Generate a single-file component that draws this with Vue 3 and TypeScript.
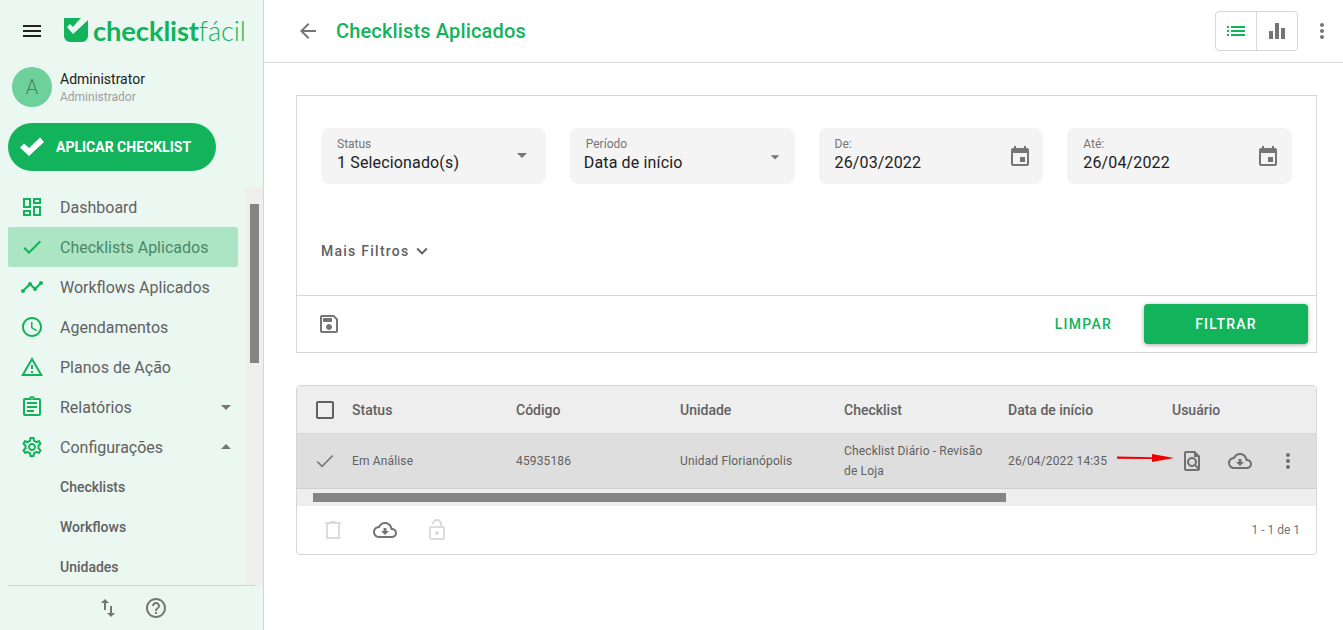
<script setup lang="ts">
interface NavItem { label: string; icon: string; active?: boolean; caret?: 'down' | 'up' }

const navItems: NavItem[] = [
  { label: 'Dashboard', icon: 'M3 13h8V3H3v10zm2-8h4v6H5V5zm8 16h8V11h-8v10zm2-8h4v6h-4v-6zM13 3v6h8V3h-8zm6 4h-4V5h4v2zM3 21h8v-6H3v6zm2-4h4v2H5v-2z' },
  { label: 'Checklists Aplicados', icon: 'M9 16.17 4.83 12l-1.42 1.41L9 19 21 7l-1.41-1.41z', active: true },
  { label: 'Workflows Aplicados', icon: 'M23 8c0 1.1-.9 2-2 2-.18 0-.35-.02-.51-.07l-3.56 3.55c.05.16.07.34.07.52 0 1.1-.9 2-2 2s-2-.9-2-2c0-.18.02-.36.07-.52l-2.55-2.55c-.16.05-.34.07-.52.07s-.36-.02-.52-.07l-4.55 4.56c.05.16.07.33.07.51 0 1.1-.9 2-2 2s-2-.9-2-2 .9-2 2-2c.18 0 .35.02.51.07l4.56-4.55C8.02 9.36 8 9.18 8 9c0-1.1.9-2 2-2s2 .9 2 2c0 .18-.02.36-.07.52l2.55 2.55c.16-.05.34-.07.52-.07s.36.02.52.07l3.55-3.56C19.02 8.35 19 8.18 19 8c0-1.1.9-2 2-2s2 .9 2 2z' },
  { label: 'Agendamentos', icon: 'M11.99 2C6.47 2 2 6.48 2 12s4.47 10 9.99 10C17.52 22 22 17.52 22 12S17.52 2 11.99 2zM12 20c-4.42 0-8-3.58-8-8s3.58-8 8-8 8 3.58 8 8-3.58 8-8 8zm.5-13H11v6l5.25 3.15.75-1.23-4.5-2.67z' },
  { label: 'Planos de Ação', icon: 'M12 5.99 19.53 19H4.47L12 5.99M12 2 1 21h22L12 2zm1 14h-2v2h2v-2zm0-6h-2v4h2v-4z' },
  { label: 'Relatórios', icon: 'M19 3h-4.18C14.4 1.84 13.3 1 12 1s-2.4.84-2.82 2H5c-.14 0-.27.01-.4.04-.39.08-.74.28-1.01.55-.18.18-.33.4-.43.64-.1.23-.16.49-.16.77v14c0 .27.06.54.16.78s.25.45.43.64c.27.27.62.47 1.01.55.13.02.26.03.4.03h14c1.1 0 2-.9 2-2V5c0-1.1-.9-2-2-2zm-7-.25c.41 0 .75.34.75.75s-.34.75-.75.75-.75-.34-.75-.75.34-.75.75-.75zM19 19H5V5h14v14zM7 15h7v2H7zm0-4h10v2H7zm0-4h10v2H7z', caret: 'down' },
  { label: 'Configurações', icon: 'M19.43 12.98c.04-.32.07-.64.07-.98s-.03-.66-.07-.98l2.11-1.65c.19-.15.24-.42.12-.64l-2-3.46c-.12-.22-.39-.3-.61-.22l-2.49 1c-.52-.4-1.08-.73-1.69-.98l-.38-2.65C14.46 2.18 14.25 2 14 2h-4c-.25 0-.46.18-.49.42l-.38 2.65c-.61.25-1.17.59-1.69.98l-2.49-1c-.23-.09-.49 0-.61.22l-2 3.46c-.13.22-.07.49.12.64l2.11 1.65c-.04.32-.07.65-.07.98s.03.66.07.98l-2.11 1.65c-.19.15-.24.42-.12.64l2 3.46c.12.22.39.3.61.22l2.49-1c.52.4 1.08.73 1.69.98l.38 2.65c.03.24.24.42.49.42h4c.25 0 .46-.18.49-.42l.38-2.65c.61-.25 1.17-.59 1.69-.98l2.49 1c.23.09.49 0 .61-.22l2-3.46c.12-.22.07-.49-.12-.64l-2.11-1.65zM17.45 11.27c.04.31.05.52.05.73 0 .21-.02.43-.05.73l-.14 1.13.89.7 1.08.84-.7 1.21-1.27-.51-1.04-.42-.9.68c-.43.32-.84.56-1.25.73l-1.06.43-.16 1.13-.2 1.35h-1.4l-.19-1.35-.16-1.13-1.06-.43c-.43-.18-.83-.41-1.23-.71l-.91-.7-1.06.43-1.27.51-.7-1.21 1.08-.84.89-.7-.14-1.13C6.52 12.43 6.5 12.2 6.5 12s.02-.43.05-.72l.14-1.13-.89-.7-1.08-.84.7-1.21 1.27.51 1.04.42.9-.68c.43-.32.84-.56 1.25-.73l1.06-.43.16-1.13.2-1.35h1.39l.19 1.35.16 1.13 1.06.43c.43.18.83.41 1.23.71l.91.7 1.06-.43 1.27-.51.7 1.21-1.07.85-.89.7.14 1.13zM12 8c-2.21 0-4 1.79-4 4s1.79 4 4 4 4-1.79 4-4-1.79-4-4-4zm0 6c-1.1 0-2-.9-2-2s.9-2 2-2 2 .9 2 2-.9 2-2 2z', caret: 'up' },
]
const subItems: string[] = ['Checklists', 'Workflows', 'Unidades']

interface Filter { label: string; value: string; kind: 'select' | 'date' }
const filters: Filter[] = [
  { label: 'Status', value: '1 Selecionado(s)', kind: 'select' },
  { label: 'Período', value: 'Data de início', kind: 'select' },
  { label: 'De:', value: '26/03/2022', kind: 'date' },
  { label: 'Até:', value: '26/04/2022', kind: 'date' },
]
const columns: string[] = ['Status', 'Código', 'Unidade', 'Checklist', 'Data de início', 'Usuário']
const cloud = 'M19.35 10.04C18.67 6.59 15.64 4 12 4 9.11 4 6.6 5.64 5.35 8.04 2.34 8.36 0 10.91 0 14c0 3.31 2.69 6 6 6h13c2.76 0 5-2.24 5-5 0-2.64-2.05-4.78-4.65-4.96zM19 18H6c-2.21 0-4-1.79-4-4 0-2.05 1.53-3.76 3.56-3.97l1.07-.11.5-.95C8.08 7.14 9.94 6 12 6c2.62 0 4.88 1.86 5.39 4.43l.3 1.5 1.53.11c1.56.1 2.78 1.41 2.78 2.96 0 1.65-1.35 3-3 3zm-5.55-8h-2.9v3H8l4 4 4-4h-2.55z'
const dots = 'M12 8c1.1 0 2-.9 2-2s-.9-2-2-2-2 .9-2 2 .9 2 2 2zm0 2c-1.1 0-2 .9-2 2s.9 2 2 2 2-.9 2-2-.9-2-2-2zm0 6c-1.1 0-2 .9-2 2s.9 2 2 2 2-.9 2-2-.9-2-2-2z'
const calendar = 'M19 4h-1V2h-2v2H8V2H6v2H5c-1.1 0-2 .9-2 2v14c0 1.1.9 2 2 2h14c1.1 0 2-.9 2-2V6c0-1.1-.9-2-2-2zm0 16H5V9h14v11zm-7-7h5v5h-5z'
</script>

<template>
  <div class="app">
    <aside class="sidebar">
      <div class="brand">
        <svg class="burger" viewBox="0 0 24 24"><path d="M3 18h18v-2H3v2zm0-5h18v-2H3v2zm0-7v2h18V6H3z" /></svg>
        <svg class="mark" viewBox="0 0 25 24">
          <path d="M0 0h17l-3 3-5 6-3-3-3 3 6 7L22 4l2-2v16a6 6 0 0 1-6 6H6a6 6 0 0 1-6-6z" />
        </svg>
        <span class="logo"><b>checklist</b><span>fácil</span></span>
      </div>
      <div class="profile">
        <div class="avatar">A</div>
        <div class="who">
          <div class="name">Administrator</div>
          <div class="role">Administrador</div>
        </div>
      </div>
      <button class="apply">
        <svg viewBox="0 0 24 24"><path d="M0 12.500 4 8.500 9 13 20 2.500 24 7 9 21z" /></svg>
        <span>APLICAR CHECKLIST</span>
      </button>
      <div class="navwrap">
        <nav class="nav">
          <a v-for="item in navItems" :key="item.label" class="navitem" :class="{ active: item.active }">
            <svg class="navicon" viewBox="0 0 24 24"><path :d="item.icon" /></svg>
            <span class="navlabel">{{ item.label }}</span>
            <svg v-if="item.caret" class="caret" viewBox="0 0 24 24"><path :d="item.caret === 'down' ? 'M7 10l5 5 5-5z' : 'M7 14l5-5 5 5z'" /></svg>
          </a>
          <a v-for="s in subItems" :key="s" class="subitem">{{ s }}</a>
        </nav>
        <div class="scroll"><div class="thumb"></div></div>
      </div>
      <div class="sidefoot">
        <svg viewBox="0 0 24 24"><path d="M16 17.01V10h-2v7.01h-3L15 21l4-3.99h-3zM9 3 5 6.99h3V14h2V6.99h3L9 3z" /></svg>
        <svg viewBox="0 0 24 24"><path d="M11 18h2v-2h-2v2zm1-16C6.48 2 2 6.48 2 12s4.48 10 10 10 10-4.48 10-10S17.52 2 12 2zm0 18c-4.41 0-8-3.59-8-8s3.59-8 8-8 8 3.59 8 8-3.59 8-8 8zm0-14c-2.21 0-4 1.79-4 4h2c0-1.1.9-2 2-2s2 .9 2 2c0 2-3 1.75-3 5h2c0-2.25 3-2.5 3-5 0-2.21-1.79-4-4-4z" /></svg>
      </div>
    </aside>

    <main class="main">
      <header class="topbar">
        <svg class="back" viewBox="0 0 24 24"><path d="M20 11H7.83l5.59-5.59L12 4l-8 8 8 8 1.41-1.41L7.83 13H20v-2z" /></svg>
        <h1>Checklists Aplicados</h1>
        <div class="toggle">
          <span class="toggle-btn">
            <svg class="green" viewBox="0 0 24 24"><path d="M3 13h2v-2H3v2zm0 4h2v-2H3v2zm0-8h2V7H3v2zm4 4h14v-2H7v2zm0 4h14v-2H7v2zM7 7v2h14V7H7z" /></svg>
          </span>
          <span class="toggle-btn">
            <svg viewBox="0 0 24 24"><path d="M10 20h4V4h-4v16zm-6 0h4v-8H4v8zM16 9v11h4V9h-4z" /></svg>
          </span>
        </div>
        <svg class="more" viewBox="0 0 24 24"><path :d="dots" /></svg>
      </header>

      <div class="content">
        <section class="filters">
          <div class="filter-body">
            <div class="fields">
              <div v-for="f in filters" :key="f.label" class="field">
                <div class="field-text">
                  <div class="field-label">{{ f.label }}</div>
                  <div class="field-value">{{ f.value }}</div>
                </div>
                <svg v-if="f.kind === 'select'" class="sel-caret" viewBox="0 0 24 24"><path d="M7 10l5 5 5-5z" /></svg>
                <svg v-else class="cal" viewBox="0 0 24 24"><path :d="calendar" /></svg>
              </div>
            </div>
            <div class="more-filters">
              <span>Mais Filtros</span>
              <svg viewBox="0 0 24 24"><path d="M7.41 8.59 12 13.17l4.59-4.58L18 10l-6 6-6-6z" /></svg>
            </div>
          </div>
          <div class="filter-foot">
            <svg class="save" viewBox="0 0 24 24"><path d="M17 3H5c-1.11 0-2 .9-2 2v14c0 1.1.89 2 2 2h14c1.1 0 2-.9 2-2V7l-4-4zm2 16H5V5h11.17L19 7.83V19zm-7-7c-1.66 0-3 1.34-3 3s1.34 3 3 3 3-1.34 3-3-1.34-3-3-3zM6 6h9v4H6z" /></svg>
            <button class="clear">LIMPAR</button>
            <button class="submit">FILTRAR</button>
          </div>
        </section>

        <section class="table">
          <div class="row head">
            <div class="check-cell"><span class="checkbox"></span></div>
            <div v-for="c in columns" :key="c" class="cell">{{ c }}</div>
          </div>
          <div class="row body">
            <div class="check-cell">
              <svg class="rowcheck" viewBox="0 0 24 24"><path d="M9 16.2 4.8 12l-1.1 1.1L9 18.4 20.4 7l-1.1-1.1z" /></svg>
            </div>
            <div class="cell">Em Análise</div>
            <div class="cell">45935186</div>
            <div class="cell">Unidad Florianópolis</div>
            <div class="cell multi">Checklist Diário - Revisão de Loja</div>
            <div class="cell">26/04/2022 14:35</div>
            <div class="actions">
              <svg class="act" viewBox="0 0 24 24"><path d="M15 2H6c-1.1 0-2 .9-2 2v16c0 1.1.9 2 2 2h12c1.1 0 2-.9 2-2V7l-5-5zM6 20V4h8v4h4v9.6l-1.9-1.9c.6-.8.9-1.7.9-2.7 0-2.8-2.2-5-5-5s-5 2.200-5 5 2.200 5 5 5c1 0 1.900-.3 2.700-.9l2.700 2.700c-.1.100-.2.200-.4.200H6zm6-4c-1.700 0-3-1.300-3-3s1.300-3 3-3 3 1.300 3 3-1.300 3-3 3z" /></svg>
              <svg class="act cloud" viewBox="0 0 24 24"><path :d="cloud" /></svg>
              <svg class="act dots" viewBox="0 0 24 24"><path :d="dots" /></svg>
            </div>
            <svg class="arrow" viewBox="0 0 60 10"><path d="M1 3.600 36 4.200 36 1 58 5 36 9 36 6 1 5.800z" /></svg>
          </div>
          <div class="hscroll"><div class="hthumb"></div></div>
          <div class="table-foot">
            <div class="bulk">
              <svg class="faded" viewBox="0 0 24 24"><path d="M15 4V3H9v1H4v2h1v15h14V6h1V4h-5zm2 15H7V6h10v13z" /></svg>
              <svg class="bulk-cloud" viewBox="0 0 24 24"><path :d="cloud" /></svg>
              <svg class="faded" viewBox="0 0 24 24"><path d="M12 17c1.100 0 2-.9 2-2s-.9-2-2-2-2 .9-2 2 .9 2 2 2zm6-9h-1V6c0-2.760-2.240-5-5-5S7 3.240 7 6h1.900c0-1.710 1.390-3.100 3.100-3.100s3.100 1.390 3.100 3.100v2H6c-1.100 0-2 .9-2 2v10c0 1.100.9 2 2 2h12c1.100 0 2-.9 2-2V10c0-1.100-.9-2-2-2zm0 12H6V10h12v10z" /></svg>
            </div>
            <span class="count">1 - 1 de 1</span>
          </div>
        </section>
      </div>
    </main>
  </div>
</template>

<style>
html, body { margin: 0; background: #fff; }
</style>

<style scoped>
.app { display: flex; height: 630px; overflow: hidden; font-family: Roboto, "Liberation Sans", sans-serif; color: #212121; }
svg { display: block; flex: none; fill: currentColor; }

.sidebar { width: 263px; flex: none; display: flex; flex-direction: column; background: #ebf8f2; border-right: 1px solid #d6d6d6; }
.brand { display: flex; align-items: center; height: 62px; padding-left: 20px; }
.burger { width: 24px; height: 24px; color: #212121; }
.mark { width: 25px; height: 24px; margin-left: 20px; margin-top: -2px; color: #12b35b; }
.logo { margin-left: 4px; margin-top: -1px; font-family: Lato, sans-serif; font-size: 27.3px; line-height: 30px; color: #12b35b; white-space: nowrap; letter-spacing: -0.1px; }
.logo b { font-weight: 700; }
.logo span { font-weight: 300; }
.profile { display: flex; align-items: center; padding: 5px 0 0 12px; height: 40px; }
.avatar { width: 40px; height: 40px; border-radius: 50%; background: #6ed09b; color: #4a7f64; font-size: 20px; font-weight: 300; display: flex; align-items: center; justify-content: center; }
.who { margin-left: 8px; }
.name { font-size: 14px; line-height: 20px; color: #212121; }
.role { font-size: 12px; line-height: 16px; color: #9e9e9e; }
.apply { display: flex; align-items: center; width: 208px; height: 48px; margin: 16px 0 16px 8px; padding: 0 0 0 12px; border: 0; border-radius: 24px; background: #12b35b; color: #fff; font: 700 14px Roboto, sans-serif; }
.apply svg { width: 24px; height: 24px; margin-right: 12px; }

.navwrap { display: flex; height: 398px; overflow: hidden; }
.nav { width: 230px; margin-left: 8px; flex: none; }
.navitem { display: flex; align-items: center; height: 40px; border-radius: 2px; color: #616161; font-size: 16px; }
.navitem.active { background: #abe5c3; color: #4d8768; }
.navicon { width: 24px; height: 24px; margin-left: 12px; color: #12b35b; }
.navlabel { margin-left: 16px; flex: 1; }
.caret { width: 24px; height: 24px; color: #757575; }
.subitem { display: block; height: 40px; line-height: 40px; padding-left: 52px; font-size: 14px; font-weight: 500; color: #616161; }
.scroll { width: 17px; margin-left: 8px; background: #eeeeee; position: relative; }
.thumb { position: absolute; left: 4px; top: 17px; width: 9px; height: 159px; background: #858585; }

.sidefoot { margin: 0 8px; width: 247px; height: 44px; box-sizing: border-box; border-top: 1px solid #d0d4d2; display: flex; align-items: center; justify-content: center; gap: 24px; color: #757575; }
.sidefoot svg { width: 24px; height: 24px; }

.main { flex: 1; min-width: 0; display: flex; flex-direction: column; }
.topbar { height: 62px; flex: none; box-sizing: content-box; border-bottom: 1px solid #d9d9d9; display: flex; align-items: center; padding-left: 32px; }
.back { width: 24px; height: 24px; color: #757575; }
h1 { margin: 0 0 0 16px; flex: 1; font-size: 20px; font-weight: 500; letter-spacing: .15px; color: #12b35b; }
.toggle { display: flex; height: 38px; border: 1px solid #d6d6d6; border-radius: 4px; margin-top: -1px; }
.toggle-btn { width: 40px; display: flex; align-items: center; justify-content: center; color: #757575; }
.toggle-btn + .toggle-btn { border-left: 1px solid #d6d6d6; }
.toggle-btn svg { width: 24px; height: 24px; }
.green { color: #12b35b; }
.more { width: 24px; height: 24px; margin: 0 9px 0 12px; color: #757575; }

.content { padding: 32px 26px 0 32px; }
.filters { border: 1px solid #d6d6d6; background: #fff; }
.filter-body { height: 200px; box-sizing: border-box; padding: 32px 24px 0; border-bottom: 1px solid #d6d6d6; }
.fields { display: flex; gap: 24px; }
.field { flex: 1; min-width: 0; height: 56px; box-sizing: border-box; background: #f4f4f4; border-radius: 8px; display: flex; align-items: center; justify-content: space-between; padding: 0 12px 2px 16px; }
.field:nth-child(2) .field-text { margin-left: -2px; }
.field-label { font-size: 12px; line-height: 14px; color: #757575; }
.field:nth-child(2) .field-label { margin-left: 2px; }
.field-value { font-size: 16px; line-height: 22px; margin-top: 1px; letter-spacing: .15px; color: #212121; }
.sel-caret { width: 24px; height: 24px; color: #757575; }
.field:nth-child(2) .sel-caret { margin-right: -4px; margin-top: 4px; transform: scale(.85); }
.cal { width: 24px; height: 24px; color: #757575; margin-top: 2px; margin-right: -1px; }
.field:nth-child(4) .cal { margin-right: 0; }
.more-filters { display: flex; align-items: center; margin-top: 55px; height: 24px; font-size: 14px; font-weight: 500; letter-spacing: 1.25px; color: #616161; }
.more-filters svg { width: 22px; height: 22px; margin-left: 2px; }
.filter-foot { height: 56px; display: flex; align-items: center; padding: 0 8px 0 20px; }
.save { width: 24px; height: 24px; color: #757575; margin-right: auto; }
.clear { border: 0; background: none; padding: 0; color: #12b35b; font: 500 14px Roboto, sans-serif; letter-spacing: 1.25px; margin-right: 32px; }
.submit { width: 164px; height: 40px; border: 0; border-radius: 4px; background: #12b35b; color: #fff; font: 500 14px Roboto, sans-serif; letter-spacing: 1.25px; box-shadow: 0 1px 4px rgba(0, 0, 0, .35); }

.table { margin-top: 32px; border: 1px solid #d6d6d6; border-radius: 4px; background: #fff; }
.row { display: grid; grid-template-columns: 55px repeat(6, 164px); align-items: center; position: relative; }
.head { height: 47px; background: #eeeeee; border-bottom: 1px solid #d6d6d6; font-size: 14px; font-weight: 500; color: #616161; }
.body { height: 54px; background: #dedede; border-bottom: 1px solid #d0d0d0; font-size: 12px; letter-spacing: .15px; color: #616161; }
.check-cell { padding-left: 19px; }
.checkbox { display: block; width: 14px; height: 14px; border: 2px solid #616161; border-radius: 2px; }
.rowcheck { width: 24px; height: 24px; margin-left: -3px; color: #757575; }
.multi { line-height: 20px; padding-right: 20px; }
.actions { display: flex; align-items: center; margin-left: 8px; width: 140px; }
.act { width: 24px; height: 24px; color: #707070; }
.act.cloud { margin-left: 24px; }
.act.dots { margin-left: 24px; }
.arrow { position: absolute; left: 819px; top: 19px; width: 60px; height: 10px; fill: #f00000; }
.hscroll { height: 17px; background: #eeeeee; position: relative; }
.hthumb { position: absolute; left: 16px; top: 4px; width: 693px; height: 9px; background: #858585; }
.table-foot { height: 48px; display: flex; align-items: center; justify-content: space-between; padding: 0 16px 0 24px; }
.bulk { display: flex; align-items: center; }
.bulk svg { width: 24px; height: 24px; }
.faded { color: #dcdcdc; }
.bulk-cloud { color: #757575; margin: 0 28px; }
.count { font-size: 12px; color: #757575; }
</style>
